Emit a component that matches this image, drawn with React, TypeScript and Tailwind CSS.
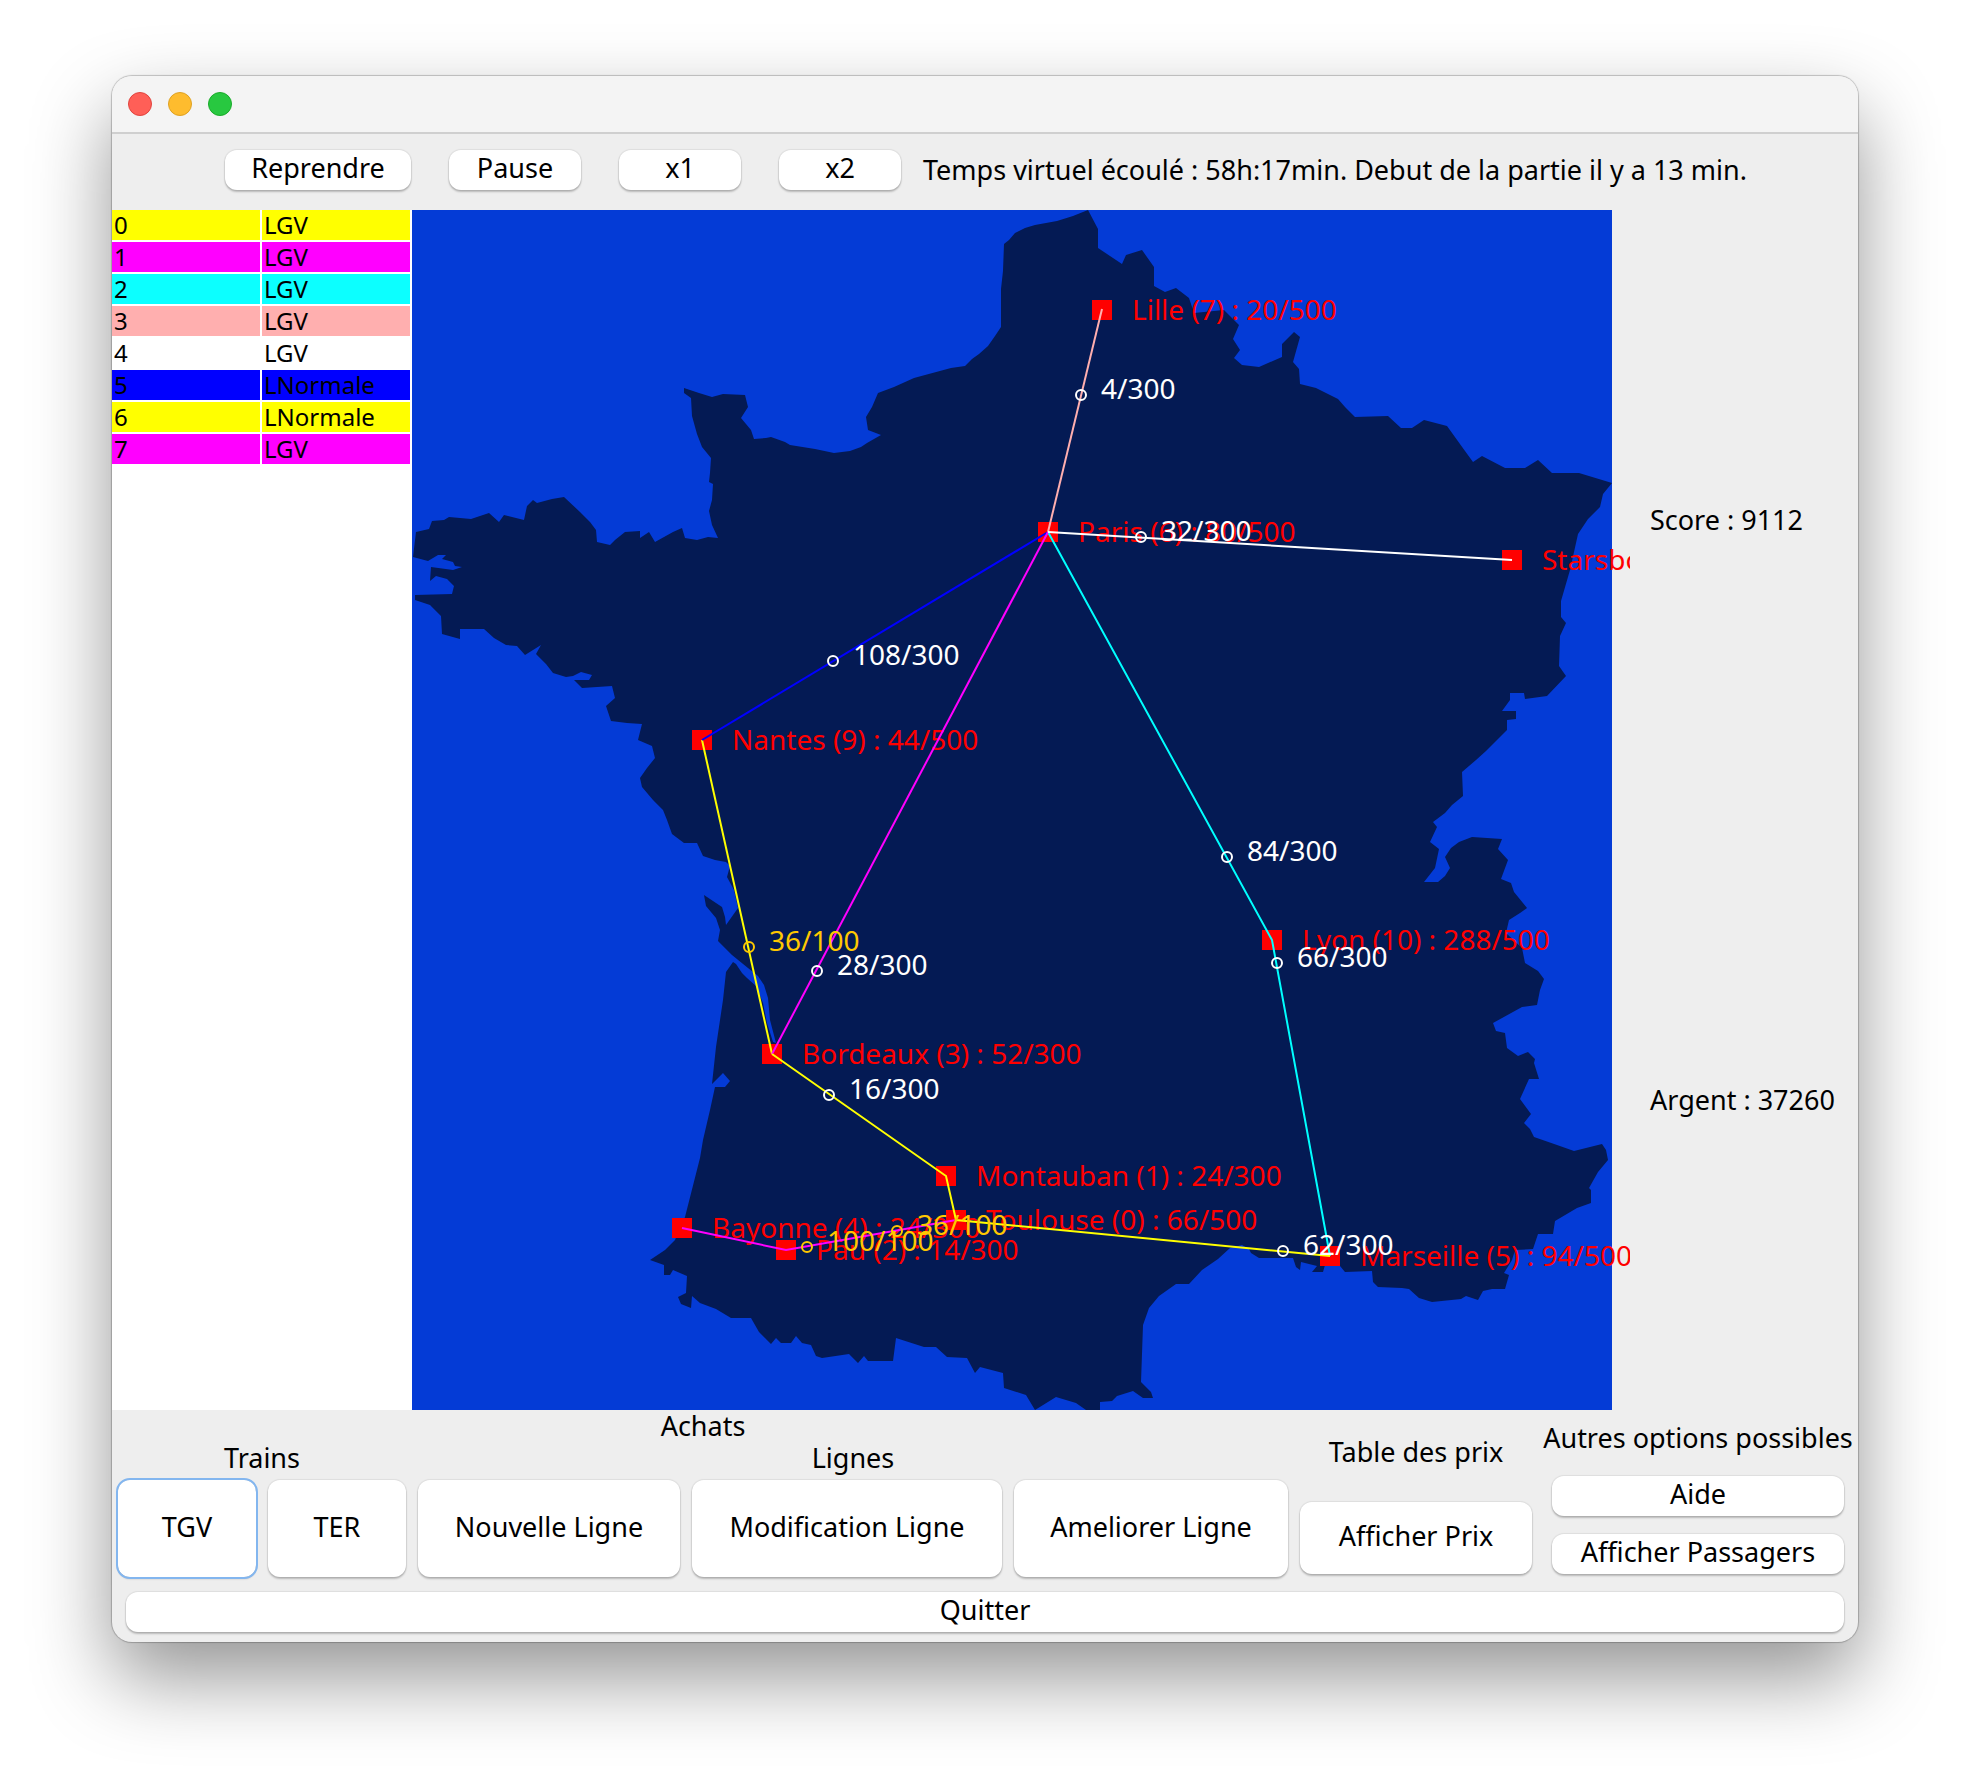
import type { ReactNode } from "react";

const COAST =
  "676,0 661,6 645,11 623,15 613,18 603,23 597,30 592,34 591,61 589,79 589,117 583,126 576,136 567,144 560,149 553,156 539,158 502,168 482,177 466,183 460,197 454,207 456,220 469,225 455,233 449,237 438,241 422,243 403,239 378,235 373,232 359,227 354,228 342,229 339,220 334,214 329,208 336,197 333,185 311,184 300,187 287,183 272,178 272,183 279,188 280,206 285,224 290,237 299,248 298,263 297,272 301,274 300,290 297,301 300,315 306,328 296,327 285,330 273,328 270,318 261,322 243,332 237,322 228,328 228,321 213,322 203,330 198,335 185,332 184,320 178,312 168,302 152,287 140,289 125,293 121,290 115,296 112,310 92,305 87,312 77,303 59,309 37,307 32,310 20,311 17,319 4,322 1,347 16,351 26,345 34,345 30,349 41,352 43,356 50,357 41,360 19,357 18,371 24,366 35,369 42,376 40,384 3,385 3,390 18,395 29,406 30,424 48,429 48,419 72,419 82,428 94,435 105,436 113,445 129,435 124,444 134,454 141,463 154,467 161,466 169,462 180,465 177,470 162,470 170,478 200,476 203,488 194,496 199,511 215,513 230,514 226,530 240,536 243,548 235,558 228,568 230,577 241,590 251,600 255,610 260,624 272,633 285,633 291,646 303,650 314,652 318,656 315,667 322,680 326,698 314,715 313,707 310,697 292,685 294,696 304,708 308,720 306,731 320,745 336,758 346,766 352,775 356,788 358,810 364,833 361,832 355,813 351,793 344,776 335,768 330,763 324,754 321,752 314,762 311,790 304,837 300,874 311,863 318,871 313,877 303,877 298,900 291,930 288,948 273,1007 263,1030 253,1040 238,1050 252,1055 252,1065 258,1065 261,1060 275,1066 274,1083 266,1087 269,1094 279,1098 280,1086 288,1093 304,1099 319,1108 339,1108 347,1122 359,1134 364,1128 369,1133 379,1133 384,1126 390,1133 399,1135 404,1146 410,1148 437,1144 446,1153 452,1146 456,1151 481,1151 484,1128 512,1137 524,1137 535,1147 555,1148 563,1163 568,1157 591,1163 592,1178 614,1185 623,1200 644,1187 664,1193 674,1200 688,1200 688,1192 700,1191 705,1186 721,1181 731,1188 741,1188 739,1182 729,1172 731,1115 737,1098 747,1086 764,1074 777,1074 790,1060 806,1049 818,1038 830,1035 837,1039 839,1043 847,1048 881,1048 884,1057 888,1060 889,1052 905,1056 900,1062 911,1062 913,1055 928,1056 933,1062 960,1061 961,1072 966,1077 990,1078 997,1079 1007,1088 1020,1092 1049,1089 1054,1086 1066,1090 1071,1081 1080,1079 1093,1079 1097,1065 1092,1063 1100,1050 1103,1040 1121,1039 1126,1024 1141,1024 1143,1011 1165,998 1179,993 1179,980 1177,978 1186,962 1196,950 1194,940 1190,934 1162,941 1145,935 1122,927 1118,919 1112,913 1119,904 1108,889 1117,869 1127,869 1122,853 1123,849 1116,842 1106,846 1095,838 1093,823 1084,821 1081,813 1110,797 1125,795 1128,780 1132,769 1126,761 1113,753 1110,738 1094,723 1097,710 1108,703 1115,698 1102,682 1099,673 1089,669 1096,650 1086,639 1090,629 1060,627 1047,632 1039,638 1033,647 1038,658 1033,666 1026,672 1012,672 1023,658 1027,639 1018,632 1025,617 1021,612 1033,603 1040,595 1051,586 1050,562 1064,550 1074,541 1095,520 1095,510 1104,509 1104,501 1090,501 1098,490 1098,483 1112,483 1113,489 1135,486 1154,466 1147,456 1148,426 1154,413 1149,407 1149,391 1158,360 1166,324 1176,309 1188,297 1191,284 1200,273 1167,263 1140,263 1126,250 1113,258 1093,258 1070,246 1061,252 1053,241 1035,216 1012,210 1000,218 989,218 976,206 943,207 933,197 926,189 904,178 888,174 887,159 881,152 888,127 882,122 870,134 870,147 847,157 830,155 822,148 828,140 821,129 827,115 812,100 782,103 777,88 764,78 753,82 742,76 742,57 730,40 714,45 710,54 686,38 686,19";

const LINE_ROWS = [
  { id: 0, kind: "LGV", color: "bg-[#ffff00]" },
  { id: 1, kind: "LGV", color: "bg-[#ff00ff]" },
  { id: 2, kind: "LGV", color: "bg-[#0cffff]" },
  { id: 3, kind: "LGV", color: "bg-[#ffafaf]" },
  { id: 4, kind: "LGV", color: "bg-white" },
  { id: 5, kind: "LNormale", color: "bg-[#0000ff]" },
  { id: 6, kind: "LNormale", color: "bg-[#ffff00]" },
  { id: 7, kind: "LGV", color: "bg-[#ff00ff]" },
];

const CITIES = [
  { x: 690, y: 100, label: "Lille (7) : 20/500" },
  { x: 636, y: 322, label: "Paris (6) : 80/500" },
  { x: 1100, y: 350, label: "Starsbourg" },
  { x: 290, y: 530, label: "Nantes (9) : 44/500" },
  { x: 860, y: 730, label: "Lyon (10) : 288/500" },
  { x: 360, y: 844, label: "Bordeaux (3) : 52/300" },
  { x: 534, y: 966, label: "Montauban (1) : 24/300" },
  { x: 544, y: 1010, label: "Toulouse (0) : 66/500" },
  { x: 270, y: 1018, label: "Bayonne (4) : 24/300" },
  { x: 374, y: 1040, label: "Pau (2) : 14/300" },
  { x: 918, y: 1046, label: "Marseille (5) : 94/500" },
];

const TRACKS = [
  { color: "#ffff00", points: "290,530 360,844" },
  { color: "#0000ff", points: "636,322 290,530" },
  { color: "#ffafaf", points: "690,99 636,322" },
  { color: "#00ffff", points: "636,322 860,730 918,1046" },
  { color: "#ff00ff", points: "636,322 360,844" },
  { color: "#ff00ff", points: "270,1018 374,1040 544,1010" },
  { color: "#ffff00", points: "360,844 534,966 544,1010 918,1046" },
  { color: "#ffffff", points: "636,322 1100,350" },
];

const TGV = "#ffffff";
const TER = "#ffc800";

const TRAINS = [
  { x: 669, y: 185, color: TGV, load: "4/300" },
  { x: 729, y: 327, color: TGV, load: "32/300" },
  { x: 421, y: 451, color: TGV, load: "108/300" },
  { x: 337, y: 737, color: TER, load: "36/100" },
  { x: 405, y: 761, color: TGV, load: "28/300" },
  { x: 417, y: 885, color: TGV, load: "16/300" },
  { x: 815, y: 647, color: TGV, load: "84/300" },
  { x: 865, y: 753, color: TGV, load: "66/300" },
  { x: 395, y: 1037, color: TER, load: "100/100" },
  { x: 485, y: 1021, color: TER, load: "36/100" },
  { x: 871, y: 1041, color: TGV, load: "62/300" },
];

function Button({ className, children }: { className: string; children: ReactNode }) {
  return (
    <button
      type="button"
      className={`rounded-xl bg-white pb-1 text-center whitespace-nowrap shadow-[0_0_1px_1px_rgba(0,0,0,0.07),0_2px_2px_rgba(0,0,0,0.22)] ${className}`}
    >
      {children}
    </button>
  );
}

function NetworkMap() {
  return (
    <svg viewBox="0 0 1218 1200" className="block h-auto w-full overflow-hidden" fontSize="28" role="img" aria-label="Carte du réseau">
      <rect width="1200" height="1200" fill="#043bd6" />
      <polygon points={COAST} fill="#041a54" />
      {CITIES.map((c) => (
        <g key={c.label} fill="#ff0000">
          <rect x={c.x - 10} y={c.y - 10} width="20" height="20" />
          <text x={c.x + 30} y={c.y + 10}>
            {c.label}
          </text>
        </g>
      ))}
      {TRACKS.map((t) => (
        <polyline key={t.points} points={t.points} fill="none" stroke={t.color} strokeWidth="2" />
      ))}
      {TRAINS.map((t) => (
        <g key={`${t.x}-${t.y}`}>
          <circle cx={t.x} cy={t.y} r="5" fill="none" stroke={t.color} strokeWidth="2" />
          <text x={t.x + 20} y={t.y + 4} fill={t.color}>
            {t.load}
          </text>
        </g>
      ))}
    </svg>
  );
}

export default function App() {
  return (
    <div className="bg-white px-28 pt-[76px] pb-[148px] font-['Noto_Sans',sans-serif] text-[27px] leading-8 text-black">
      <main className="overflow-hidden rounded-[20px] bg-[#eeeeee] shadow-[0_0_1px_1px_rgba(0,0,0,0.22),0_36px_80px_rgba(0,0,0,0.42)]">
        <header className="flex h-[58px] items-center gap-4 border-b-2 border-[#cfcfcf] bg-[#f4f4f4] px-4">
          <button type="button" aria-label="Fermer" className="size-6 rounded-full border border-[#e0443e] bg-[#ff5f57]" />
          <button type="button" aria-label="Réduire" className="size-6 rounded-full border border-[#dea123] bg-[#febc2e]" />
          <button type="button" aria-label="Agrandir" className="size-6 rounded-full border border-[#1aab29] bg-[#28c840]" />
        </header>

        <div className="flex h-[76px] items-center justify-center gap-[38px] pb-1 pl-3">
          <Button className="h-10 w-[186px]">Reprendre</Button>
          <Button className="h-10 w-[132px]">Pause</Button>
          <Button className="h-10 w-[122px]">x1</Button>
          <Button className="h-10 w-[122px]">x2</Button>
          <p className="-ml-4 min-w-[834px] whitespace-nowrap">Temps virtuel écoulé : 58h:17min. Debut de la partie il y a 13 min.</p>
        </div>

        <div className="grid grid-cols-[300fr_1218fr_228fr]">
          <div className="bg-white">
            <table className="w-full table-fixed border-separate border-spacing-0 text-2xl leading-[30px]">
              <tbody>
                {LINE_ROWS.map((r) => (
                  <tr key={r.id}>
                    <td className={`border-r-2 border-b-2 border-white p-0 pl-0.5 ${r.color}`}>{r.id}</td>
                    <td className={`border-r-2 border-b-2 border-white p-0 pl-0.5 ${r.color}`}>{r.kind}</td>
                  </tr>
                ))}
              </tbody>
            </table>
          </div>
          <NetworkMap />
          <div className="flex flex-col justify-around px-5 py-5 whitespace-nowrap">
            <p>Score : 9112</p>
            <p>Argent : 37260</p>
          </div>
        </div>

        <footer>
          <div className="grid grid-cols-[1182fr_244fr_320fr]">
            <section>
              <h2 className="text-center">Achats</h2>
              <div className="grid grid-cols-[300fr_882fr]">
                <div>
                  <h3 className="text-center">Trains</h3>
                  <div className="grid grid-cols-2 gap-3 px-1.5 pt-1.5 pb-[5px]">
                    <Button className="h-[97px] outline-2 outline-[#83b6ef]">TGV</Button>
                    <Button className="h-[97px]">TER</Button>
                  </div>
                </div>
                <div>
                  <h3 className="text-center">Lignes</h3>
                  <div className="grid grid-cols-[262fr_310fr_274fr] gap-3 px-1.5 pt-1.5 pb-[5px]">
                    <Button className="h-[97px]">Nouvelle Ligne</Button>
                    <Button className="h-[97px]">Modification Ligne</Button>
                    <Button className="h-[97px]">Ameliorer Ligne</Button>
                  </div>
                </div>
              </div>
            </section>
            <section className="flex flex-col justify-between px-1.5 pt-6.5 pb-2">
              <h2 className="text-center">Table des prix</h2>
              <Button className="h-[72px]">Afficher Prix</Button>
            </section>
            <section className="flex flex-col px-3.5 pt-3">
              <h2 className="-mx-3.5 text-center whitespace-nowrap">Autres options possibles</h2>
              <Button className="mt-[22px] h-10">Aide</Button>
              <Button className="mt-[18px] h-10">Afficher Passagers</Button>
            </section>
          </div>
          <div className="flex px-3.5 py-2.5">
            <Button className="h-10 flex-1">Quitter</Button>
          </div>
        </footer>
      </main>
    </div>
  );
}
